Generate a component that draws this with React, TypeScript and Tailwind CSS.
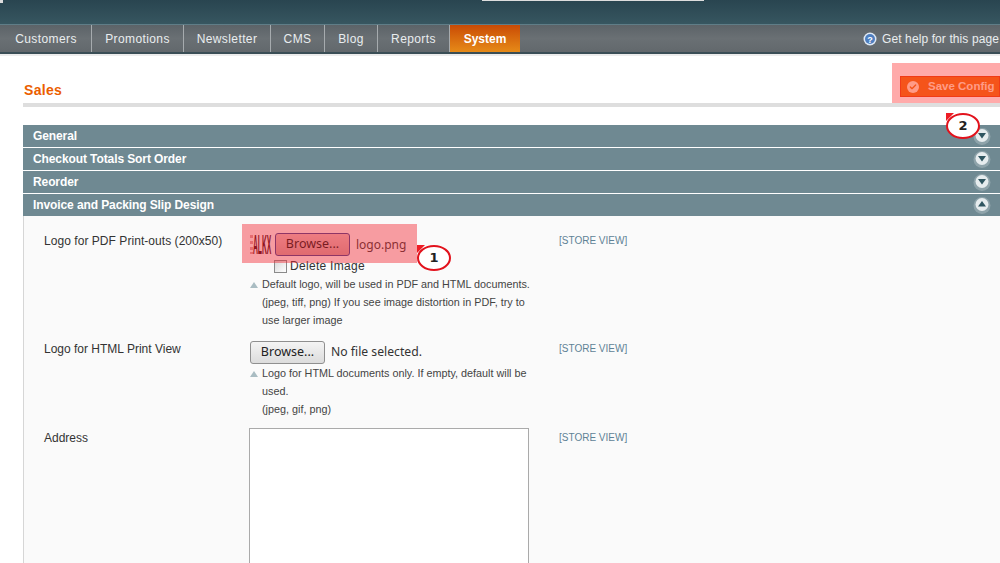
import type { FC } from 'react';
import { Check } from 'lucide-react';

const navItems = [
  { label: 'Customers', width: 'w-[91px]' },
  { label: 'Promotions', width: 'w-[92px]' },
  { label: 'Newsletter', width: 'w-[87px]' },
  { label: 'CMS', width: 'w-[54px]' },
  { label: 'Blog', width: 'w-[53px]' },
  { label: 'Reports', width: 'w-[72px]' },
];

const Arrow: FC<{ up?: boolean }> = ({ up }) => (
  <svg width="18" height="18" viewBox="0 0 18 18" className="block">
    <circle cx="9" cy="9.5" r="8.5" fill="#8ea3aa" />
    <circle cx="9" cy="8.5" r="6.5" fill="#e6ecee" />
    <path d={up ? 'M5 10.5 L13 10.5 L9 5 Z' : 'M5 6 L13 6 L9 11.5 Z'} fill="#2f5560" />
  </svg>
);

const SectionBar: FC<{ title: string; up?: boolean }> = ({ title, up }) => (
  <div className="h-[22px] mb-px bg-[#6f8992] flex items-center justify-between pl-[10px] pr-[9px] text-white text-[12px] font-bold tracking-[-0.1px]">
    <span>{title}</span>
    <Arrow up={up} />
  </div>
);

const Note: FC<{ lines: string[] }> = ({ lines }) => (
  <div className="relative pl-[13px] text-[10.8px] leading-[18px] text-[#444]">
    <span className="absolute left-[1px] top-[7px] w-0 h-0 border-x-[4px] border-x-transparent border-b-[6px] border-b-[#a9bcc2]" />
    {lines.map(l => (
      <div key={l}>{l}</div>
    ))}
  </div>
);

const BrowseButton: FC<{ focused?: boolean }> = ({ focused }) => (
  <span
    className={`inline-flex items-center justify-center w-[75px] h-[23px] rounded-[3px] border bg-gradient-to-b text-[12.5px] font-['Noto_Sans','Liberation_Sans',sans-serif] ${
      focused ? 'text-[#111] border-[#3b3f8f] from-[#e8c0c0] to-[#d0a0a0]' : 'text-[#222] border-[#8f8f8f] ml-px from-[#f4f4f4] to-[#dcdcdc]'
    }`}
  >
    Browse...
  </span>
);

const StoreView: FC = () => <span className="pt-[2px] text-[10px] text-[#5f8296]">[STORE VIEW]</span>;

const Callout: FC<{ n: number; className: string }> = ({ n, className }) => (
  <div className={`absolute ${className}`}>
    <span className="absolute left-0 top-0 w-0 h-0 border-t-[8px] border-r-[8px] border-t-[#ee1c25] border-r-transparent" />
    <span className="relative flex items-center justify-center w-[34px] h-[26px] rounded-[50%] border-2 border-[#e2121c] bg-white text-[13px] font-bold text-[#222] font-['DejaVu_Sans',sans-serif]">
      {n}
    </span>
  </div>
);

// squeezed wordmark, the uploaded logo image in the reference
const LogoMark: FC = () => (
  <svg width="26" height="23" viewBox="0 0 26 23" className="block shrink-0 overflow-visible">
    <rect x="1" y="2" width="3" height="3" fill="#d9a0a0" />
    <rect x="1" y="8" width="3" height="3" fill="#d9a0a0" />
    <rect x="1" y="14" width="3" height="3" fill="#d9a0a0" />
    <rect x="1" y="19" width="3" height="2" fill="#d9a0a0" />
    <g transform="translate(4 21) scale(0.25 1)">
      <text x="0" y="0" fontSize="27" fontWeight="700" fontFamily="Liberation Sans" fill="#3f0510">
        ALKX
      </text>
    </g>
  </svg>
);

export default function App() {
  return (
    <div className="relative w-[1000px] h-[563px] overflow-hidden bg-white font-['Liberation_Sans',Arial,sans-serif]">
      {/* header */}
      <div className="relative h-[24px] bg-gradient-to-b from-[#294550] to-[#375660]">
        <div className="absolute left-[482px] top-0 w-[222px] h-px bg-[#ddd]" />
        <div className="absolute left-0 top-0 w-[3px] h-[3px] bg-[#ddd]" />
      </div>
      <div className="h-px bg-[#5f7d87]" />

      {/* nav */}
      <div className="h-[27px] flex bg-gradient-to-b from-[#5c6368] via-[#6a7074] to-[#62686c] border-b-2 border-[#3a4e56] box-content pl-[1px] text-[12px] text-[#e9edef]">
        {navItems.map(item => (
          <div key={item.label} className={`${item.width} flex items-center justify-center border-r border-[#a6abae] tracking-[0.4px]`}>
            {item.label}
          </div>
        ))}
        <div className="w-[70px] flex items-center justify-center font-bold text-white bg-gradient-to-b from-[#c94a05] to-[#e68a18]">
          System
        </div>
        <div className="flex-1 flex items-center justify-end gap-[5px] pr-[1px] tracking-[0.1px]">
          <svg width="14" height="14" viewBox="0 0 14 14">
            <circle cx="7" cy="7" r="6.5" fill="#dfe9f5" />
            <circle cx="7" cy="7" r="5" fill="#4f7fc0" />
            <text x="7" y="10.5" textAnchor="middle" fontSize="9" fontWeight="700" fill="#fff">?</text>
          </svg>
          <span className="whitespace-nowrap">Get help for this page</span>
        </div>
      </div>
      <div className="h-[2px] bg-[#ececec]" />

      {/* content */}
      <div className="pl-[23px]">
        <div className="h-[47px] border-b-[4px] border-[#dedede] box-content flex items-end justify-between">
          <h3 className="ml-px text-[14px] font-bold text-[#eb5e00] leading-[17px] mb-[4px] tracking-[0.3px]">Sales</h3>
          <div className="flex items-center gap-[9px] w-[100px] h-[21px] mb-[6px] bg-[#ee700f] border border-[#e8470b] pl-[6px] text-[11.5px] font-bold text-[#ffe6c5] shrink-0">
            <span className="w-[12px] h-[12px] rounded-full bg-[#ffe6c5] flex items-center justify-center shrink-0">
              <Check size={8} strokeWidth={4} className="text-[#ee700f]" />
            </span>
            <span className="whitespace-nowrap">Save Config</span>
          </div>
        </div>

        <div className="mt-[18px]">
          <SectionBar title="General" />
          <SectionBar title="Checkout Totals Sort Order" />
          <SectionBar title="Reorder" />
          <SectionBar title="Invoice and Packing Slip Design" up />
        </div>

        <div className="-mt-px h-[400px] bg-[#fafafa] border-l border-[#d6d6d6] pt-[15px] text-[12px] text-[#333]">
          {/* pdf logo */}
          <div className="flex">
            <div className="w-[205px] pl-[20px] pt-[1px] tracking-[0.05px]">Logo for PDF Print-outs (200x50)</div>
            <div className="w-[330px] pl-[20px] pt-[2px]">
              <div className="flex items-center h-[23px]">
                <LogoMark />
                <BrowseButton focused />
                <span className="ml-[6px] text-[12px] font-['Noto_Sans',sans-serif]">logo.png</span>
              </div>
              <div className="flex items-center h-[16px] mt-[2px] pl-[25px] gap-[3px] text-[12px] tracking-[0.3px]">
                <span className="w-[13px] h-[13px] border border-[#8a8a8a] bg-gradient-to-br from-[#d8d8d8] to-white" />
                Delete Image
              </div>
              <div className="mt-[1px]">
                <Note lines={['Default logo, will be used in PDF and HTML documents.', '(jpeg, tiff, png) If you see image distortion in PDF, try to', 'use larger image']} />
              </div>
            </div>
            <StoreView />
          </div>

          {/* html logo */}
          <div className="flex mt-[10px]">
            <div className="w-[205px] pl-[20px] pt-[1px]">Logo for HTML Print View</div>
            <div className="w-[330px] pl-[20px] pt-[2px]">
              <div className="flex items-center h-[23px]">
                <BrowseButton />
                <span className="ml-[6px] text-[12.2px] font-['Noto_Sans',sans-serif]">No file selected.</span>
              </div>
              <Note lines={['Logo for HTML documents only. If empty, default will be', 'used.', '(jpeg, gif, png)']} />
            </div>
            <StoreView />
          </div>

          {/* address */}
          <div className="flex mt-[10px]">
            <div className="w-[205px] pl-[20px] pt-[1px]">Address</div>
            <div className="w-[330px] pl-[20px]">
              <div className="w-[280px] h-[200px] bg-white border border-[#aaa]" />
            </div>
            <StoreView />
          </div>
        </div>
      </div>

      {/* annotation overlays */}
      <div className="absolute left-[892px] top-[63px] w-[108px] h-[40px] bg-[#ff2a2a]/40" />
      <div className="absolute left-[242px] top-[224px] w-[175px] h-[39px] bg-[#f52a35]/45" />
      <Callout n={1} className="left-[417px] top-[245px]" />
      <Callout n={2} className="left-[946px] top-[113px]" />
    </div>
  );
}
